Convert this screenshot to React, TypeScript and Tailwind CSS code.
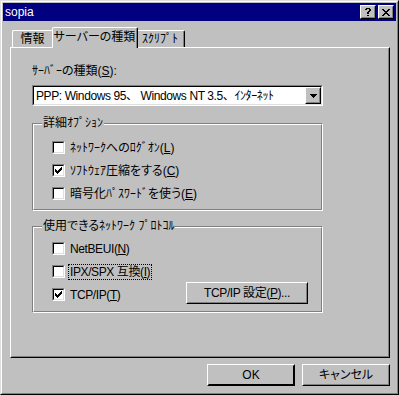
import React from "react";

function Raised({
  className = "",
  inner = "",
  children,
}: {
  className?: string;
  inner?: string;
  children?: React.ReactNode;
}) {
  return (
    <div className={`border border-t-white border-l-white border-r-black border-b-black bg-[#c0c0c0] ${className}`}>
      <div className={`w-full h-full border border-t-[#c0c0c0] border-l-[#c0c0c0] border-r-[#808080] border-b-[#808080] ${inner}`}>
        {children}
      </div>
    </div>
  );
}

function CheckBox({ checked }: { checked?: boolean }) {
  return (
    <div className="w-[13px] h-[13px] shrink-0 border border-t-[#808080] border-l-[#808080] border-r-white border-b-white">
      <div className="w-full h-full border border-t-black border-l-black border-r-[#dfdfdf] border-b-[#dfdfdf] bg-white">
        {checked && (
          <svg width="9" height="9" viewBox="0 0 9 9" shapeRendering="crispEdges" className="block">
            <rect x="1" y="3" width="1" height="3" fill="black" />
            <rect x="2" y="4" width="1" height="3" fill="black" />
            <rect x="3" y="5" width="1" height="3" fill="black" />
            <rect x="4" y="4" width="1" height="3" fill="black" />
            <rect x="5" y="3" width="1" height="3" fill="black" />
            <rect x="6" y="2" width="1" height="3" fill="black" />
            <rect x="7" y="1" width="1" height="3" fill="black" />
          </svg>
        )}
      </div>
    </div>
  );
}

function U({ children }: { children: React.ReactNode }) {
  return <span className="underline underline-offset-[1px]">{children}</span>;
}

function Row({ checked, children }: { checked?: boolean; children: React.ReactNode }) {
  return (
    <div className="flex items-center h-[13px]">
      <CheckBox checked={checked} />
      <div className="ml-[5px] whitespace-nowrap leading-[14px]">{children}</div>
    </div>
  );
}

function Group({
  label,
  className = "",
  inner = "",
  children,
}: {
  label: string;
  className?: string;
  inner?: string;
  children?: React.ReactNode;
}) {
  return (
    <div className={`relative w-[291px] border border-t-[#808080] border-l-[#808080] border-r-white border-b-white ${className}`}>
      <div className={`w-full h-full border border-t-white border-l-white border-r-[#808080] border-b-[#808080] ${inner}`}>
        {children}
      </div>
      <div className="absolute left-[9px] top-[-8px] px-[1px] bg-[#c0c0c0] leading-[14px] whitespace-nowrap">
        {label}
      </div>
    </div>
  );
}

function Tab({ w, children }: { w: string; children: React.ReactNode }) {
  return (
    <div className={`${w} h-[17px] rounded-t-[2px] border-t border-l border-r border-t-white border-l-white border-r-black bg-[#c0c0c0]`}>
      <div className="h-full border-r border-r-[#808080] flex items-center justify-center leading-[14px] whitespace-nowrap">
        {children}
      </div>
    </div>
  );
}

const Comma = () => <span className="[font-feature-settings:normal]">、</span>;

export default function App() {
  return (
    <div className="w-[399px] h-[395px] bg-[#c0c0c0] text-black text-[12px] [font-family:'Liberation_Sans','Noto_Sans_CJK_JP',sans-serif] [font-feature-settings:'palt']">
      <div className="w-full h-full border border-t-[#dfdfdf] border-l-[#dfdfdf] border-r-black border-b-black">
        <div className="w-full h-full border border-t-white border-l-white border-r-[#808080] border-b-[#808080] p-px flex flex-col">
          {/* Title bar */}
          <div className="h-[18px] bg-[#000080] flex items-center pl-[2px] pr-[2px]">
            <span className="text-white leading-[14px]">sopia</span>
            <div className="ml-auto flex gap-[2px]">
              <Raised className="w-[16px] h-[14px]" inner="flex items-center justify-center">
                <svg width="6" height="8" viewBox="0 0 6 8" shapeRendering="crispEdges">
                  <rect x="1" y="0" width="4" height="1" fill="black" />
                  <rect x="0" y="1" width="2" height="1" fill="black" />
                  <rect x="4" y="1" width="2" height="2" fill="black" />
                  <rect x="3" y="3" width="2" height="1" fill="black" />
                  <rect x="2" y="4" width="2" height="2" fill="black" />
                  <rect x="2" y="7" width="2" height="1" fill="black" />
                </svg>
              </Raised>
              <Raised className="w-[16px] h-[14px]" inner="flex items-center justify-center">
                <svg width="8" height="7" viewBox="0 0 8 7" shapeRendering="crispEdges">
                  <rect x="0" y="0" width="2" height="1" fill="black" />
                  <rect x="6" y="0" width="2" height="1" fill="black" />
                  <rect x="1" y="1" width="2" height="1" fill="black" />
                  <rect x="5" y="1" width="2" height="1" fill="black" />
                  <rect x="2" y="2" width="4" height="1" fill="black" />
                  <rect x="3" y="3" width="2" height="1" fill="black" />
                  <rect x="2" y="4" width="4" height="1" fill="black" />
                  <rect x="1" y="5" width="2" height="1" fill="black" />
                  <rect x="5" y="5" width="2" height="1" fill="black" />
                  <rect x="0" y="6" width="2" height="1" fill="black" />
                  <rect x="6" y="6" width="2" height="1" fill="black" />
                </svg>
              </Raised>
            </div>
          </div>

          {/* Tabs */}
          <div className="mt-[6px] h-[20px] ml-[9px] flex items-end">
            <Tab w="w-[42px]">情報</Tab>
            <div className="relative z-10 w-[86px] h-[21px] mx-[-2px] mb-[-1px] rounded-t-[2px] border-t border-l border-r border-t-white border-l-white border-r-black bg-[#c0c0c0]">
              <div className="h-full border-r border-r-[#808080] flex items-start justify-center pt-[2px] leading-[14px] whitespace-nowrap">
                サーバーの種類
              </div>
            </div>
            <Tab w="w-[49px]">ｽｸﾘﾌﾟﾄ</Tab>
          </div>

          {/* Panel */}
          <div className="ml-[7px] w-[380px] h-[311px] border border-t-white border-l-white border-r-black border-b-black">
            <div className="w-full h-full border border-t-[#c0c0c0] border-l-[#c0c0c0] border-r-[#808080] border-b-[#808080] pl-[20px] pt-[14px] flex flex-col">
              <div className="leading-[16px] whitespace-nowrap">
                ｻｰﾊﾞｰの種類(<U>S</U>):
              </div>
              {/* Dropdown */}
              <div className="mt-[6px] w-[291px] h-[21px] border border-t-[#808080] border-l-[#808080] border-r-white border-b-white">
                <div className="w-full h-full border border-t-black border-l-black border-r-[#dfdfdf] border-b-[#dfdfdf] bg-white flex items-center">
                  <span className="pl-[2px] whitespace-nowrap leading-[14px] tracking-[-0.4px]">
                    PPP: Windows 95<Comma /> Windows NT 3.5<Comma />ｲﾝﾀｰﾈｯﾄ
                  </span>
                  <Raised className="ml-auto w-[16px] h-[17px] shrink-0" inner="flex items-center justify-center">
                    <svg width="7" height="4" viewBox="0 0 7 4" shapeRendering="crispEdges">
                      <rect x="0" y="0" width="7" height="1" fill="black" />
                      <rect x="1" y="1" width="5" height="1" fill="black" />
                      <rect x="2" y="2" width="3" height="1" fill="black" />
                      <rect x="3" y="3" width="1" height="1" fill="black" />
                    </svg>
                  </Raised>
                </div>
              </div>

              <Group label="詳細ｵﾌﾟｼｮﾝ" className="mt-[17px] h-[88px]" inner="pl-[18px] pt-[16px] flex flex-col gap-[10px]">
                <Row>
                  ﾈｯﾄﾜｰｸへのﾛｸﾞｵﾝ(<U>L</U>)
                </Row>
                <Row checked>
                  ｿﾌﾄｳｪｱ圧縮をする(<U>C</U>)
                </Row>
                <Row>
                  暗号化ﾊﾟｽﾜｰﾄﾞを使う(<U>E</U>)
                </Row>
              </Group>

              <Group
                label="使用できるﾈｯﾄﾜｰｸ ﾌﾟﾛﾄｺﾙ"
                className="mt-[15px] h-[87px]"
                inner="pl-[18px] pr-[13px] pt-[14px] flex flex-col gap-[10px]"
              >
                <Row>
                  <span className="tracking-[-0.4px]">
                    NetBEUI(<U>N</U>)
                  </span>
                </Row>
                <Row>
                  <span className="outline outline-1 outline-dotted outline-black px-[1px] ml-[-1px] tracking-[-0.4px]">
                    IPX/SPX 互換(<U>I</U>)
                  </span>
                </Row>
                <div className="flex items-center h-[13px]">
                  <CheckBox checked />
                  <div className="ml-[5px] whitespace-nowrap leading-[14px] tracking-[-0.4px]">
                    TCP/IP(<U>T</U>)
                  </div>
                  <Raised className="ml-auto mb-[3px] w-[122px] h-[22px] shrink-0" inner="flex items-center justify-center">
                    <span className="whitespace-nowrap leading-[14px] tracking-[-0.4px]">
                      TCP/IP 設定(<U>P</U>)...
                    </span>
                  </Raised>
                </div>
              </Group>
            </div>
          </div>

          {/* Bottom buttons */}
          <div className="mt-[6px] flex justify-end gap-[7px] pr-[6px]">
            <div className="w-[88px] h-[22px] border border-t-white border-l-white border-r-black border-b-black">
              <div className="w-full h-full border border-t-[#c0c0c0] border-l-[#c0c0c0] border-r-black border-b-black flex items-center justify-center leading-[14px]">
                OK
              </div>
            </div>
            <Raised className="w-[88px] h-[22px]" inner="flex items-center justify-center leading-[14px]">
              キャンセル
            </Raised>
          </div>
        </div>
      </div>
    </div>
  );
}
